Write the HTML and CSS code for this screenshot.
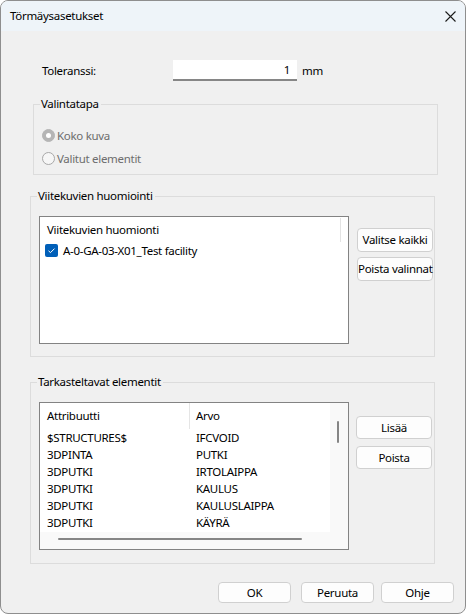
FILE: index.html
```html
<!DOCTYPE html>
<html lang="fi">
<head>
<meta charset="utf-8">
<title>Törmäysasetukset</title>
<link rel="stylesheet" href="styles.css">
</head>
<body>
<div class="window">
  <div class="titlebar">
    <span class="title">Törmäysasetukset</span>
    <svg class="close" width="11" height="11" viewBox="0 0 11 11"><path d="M0.5 0.5L10.5 10.5M10.5 0.5L0.5 10.5" stroke="#1b1b1b" stroke-width="1.1" fill="none"/></svg>
  </div>
  <div class="content">
    <div class="tol-row">
      <span class="tol-label">Toleranssi:</span>
      <div class="input">1</div>
      <span class="unit">mm</span>
    </div>

    <div class="group g1">
      <span class="group-title">Valintatapa</span>
      <div class="radio-row disabled"><span class="radio checked"></span><span>Koko kuva</span></div>
      <div class="radio-row disabled"><span class="radio"></span><span>Valitut elementit</span></div>
    </div>

    <div class="group g2">
      <span class="group-title">Viitekuvien huomiointi</span>
      <div class="group-body">
        <div class="listbox lb1">
          <div class="lb1-header"><span>Viitekuvien huomionti</span><span class="lb1-sep"></span></div>
          <div class="check-row">
            <span class="checkbox"><svg width="13" height="13" viewBox="0 0 13 13"><path d="M3.5 6.8L5.5 8.6L9.5 4.6" stroke="#fff" stroke-width="1" fill="none"/></svg></span>
            <span>A-0-GA-03-X01_Test facility</span>
          </div>
        </div>
        <div class="side-buttons sb1">
          <button class="btn">Valitse kaikki</button>
          <button class="btn">Poista valinnat</button>
        </div>
      </div>
    </div>

    <div class="group g3">
      <span class="group-title">Tarkasteltavat elementit</span>
      <div class="group-body">
        <div class="listbox lv">
          <div class="lv-main">
            <div class="lv-head">
              <div class="col1">Attribuutti</div>
              <div class="col2">Arvo</div>
            </div>
            <div class="lv-row"><div class="col1">$STRUCTURES$</div><div class="col2">IFCVOID</div></div>
            <div class="lv-row"><div class="col1">3DPINTA</div><div class="col2">PUTKI</div></div>
            <div class="lv-row"><div class="col1">3DPUTKI</div><div class="col2">IRTOLAIPPA</div></div>
            <div class="lv-row"><div class="col1">3DPUTKI</div><div class="col2">KAULUS</div></div>
            <div class="lv-row"><div class="col1">3DPUTKI</div><div class="col2">KAULUSLAIPPA</div></div>
            <div class="lv-row"><div class="col1">3DPUTKI</div><div class="col2">KÄYRÄ</div></div>
          </div>
          <div class="vscroll"><span class="vthumb"></span></div>
          <div class="hscroll"><span class="hthumb"></span></div>
          <div class="corner"></div>
        </div>
        <div class="side-buttons sb2">
          <button class="btn">Lisää</button>
          <button class="btn">Poista</button>
        </div>
      </div>
    </div>

    <div class="footer">
      <button class="btn fbtn ok">OK</button>
      <button class="btn fbtn cancel">Peruuta</button>
      <button class="btn fbtn help">Ohje</button>
    </div>
  </div>
</div>
</body>
</html>
```

FILE: styles.css
```css
* { box-sizing: border-box; }
html, body { margin: 0; padding: 0; background: #ffffff; }
body {
  font-family: "Noto Sans", "Open Sans", sans-serif;
  font-size: 11.5px;
  letter-spacing: -0.3px;
  color: #000;
}
.window {
  width: 466px;
  height: 614px;
  border: 1px solid #8e8e8e;
  border-radius: 8px;
  overflow: hidden;
  background: #f0f0f0;
  display: flex;
  flex-direction: column;
}
.titlebar {
  height: 30px;
  background: #eef4f9;
  display: flex;
  align-items: center;
  justify-content: space-between;
  padding: 0 9px 0 9px;
  flex: none;
}
.title { line-height: 16px; }
.close { display: block; }
.content {
  flex: 1;
  display: flex;
  flex-direction: column;
}
.tol-row {
  margin-top: 29px;
  margin-left: 41px;
  height: 21px;
  display: flex;
  align-items: center;
}
.tol-label { width: 131px; }
.input {
  width: 124px;
  height: 21px;
  background: #fff;
  border-bottom: 2px solid #868686;
  text-align: right;
  padding-right: 7px;
  line-height: 20px;
}
.unit { margin-left: 5px; }

.group {
  position: relative;
  border: 1px solid #dcdcdc;
  width: 405px;
  margin-left: 29px;
}
.group-title {
  position: absolute;
  top: -9px;
  left: 6px;
  padding: 0 2px 0 1px;
  background: #f0f0f0;
  line-height: 16px;
  white-space: nowrap;
}
.g1 {
  margin-left: 32px;
  margin-top: 23px;
  height: 71px;
  padding: 19px 0 0 8px;
}
.radio-row {
  height: 23px;
  display: flex;
  align-items: center;
  gap: 2px;
}
.disabled { color: #6d6d6d; }
.radio {
  width: 13px;
  height: 13px;
  border-radius: 50%;
  border: 1px solid #a8a8a8;
  background: #f6f6f6;
  position: relative;
  flex: none;
}
.radio.checked {
  background: #b5b5b5;
  border-color: #b5b5b5;
}
.radio.checked::after {
  content: "";
  position: absolute;
  left: 3px;
  top: 3px;
  width: 5px;
  height: 5px;
  border-radius: 50%;
  background: #fff;
}

.g2 {
  margin-top: 21px;
  height: 161px;
  padding: 19px 0 0 8px;
}
.g3 {
  margin-top: 25px;
  height: 182px;
  padding: 19px 0 0 8px;
}
.group-body {
  display: flex;
  align-items: flex-start;
}
.listbox {
  width: 310px;
  background: #fff;
  border: 1px solid #838383;
  flex: none;
}
.lb1 { height: 128px; }
.lb1-header {
  height: 25px;
  display: flex;
  align-items: center;
  justify-content: space-between;
  padding-left: 7px;
  padding-right: 7px;
}
.lb1-sep {
  width: 1px;
  height: 24px;
  background: #e3e3e3;
  align-self: flex-start;
  margin-top: 1px;
}
.check-row {
  height: 17px;
  display: flex;
  align-items: center;
  padding-left: 5px;
  gap: 5px;
  white-space: nowrap;
}
.checkbox {
  width: 13px;
  height: 13px;
  border-radius: 2px;
  background: #005fb8;
  display: block;
  flex: none;
}
.checkbox svg { display: block; }

.side-buttons {
  display: flex;
  flex-direction: column;
}
.sb1 { margin-left: 8px; margin-top: 12px; gap: 5px; }
.sb1 .btn { width: 76px; height: 24px; }
.sb2 { margin-left: 7px; margin-top: 14px; gap: 7px; }
.sb2 .btn { width: 76px; height: 23px; }

.btn {
  font-family: inherit;
  font-size: inherit;
  letter-spacing: inherit;
  color: #000;
  background: #fdfdfd;
  border: 1px solid #d0d0d0;
  border-radius: 4px;
  padding: 0;
  line-height: 16px;
  white-space: nowrap;
}

.lv {
  height: 148px;
  display: grid;
  grid-template-columns: 290px 18px;
  grid-template-rows: 129px 17px;
  background: #f9f9f9;
}
.lv-main { background: #fff; overflow: hidden; white-space: nowrap; }
.lv-head {
  height: 26px;
  display: flex;
  align-items: center;
}
.lv-head .col1 { border-right: 1px solid #e5e5e5; height: 26px; line-height: 26px; }
.lv-head .col2 { line-height: 26px; }
.col1 { width: 150px; padding-left: 7px; flex: none; }
.col2 { padding-left: 6px; }
.lv-row {
  height: 17px;
  display: flex;
  align-items: center;
}
.vscroll {
  position: relative;
  background: #f9f9f9;
}
.vthumb {
  position: absolute;
  left: 7px;
  top: 18px;
  width: 2px;
  height: 22px;
  background: #858585;
  border-radius: 1px;
}
.hscroll {
  position: relative;
  background: #f9f9f9;
}
.hthumb {
  position: absolute;
  left: 18px;
  top: 6px;
  height: 2px;
  width: 244px;
  background: #858585;
  border-radius: 1px;
}
.corner { background: #f9f9f9; }

.footer {
  margin-top: 18px;
  display: flex;
  padding-left: 217px;
}
.fbtn { width: 73px; height: 21px; }
.cancel { margin-left: 10px; }
.help { margin-left: 7px; }
```
